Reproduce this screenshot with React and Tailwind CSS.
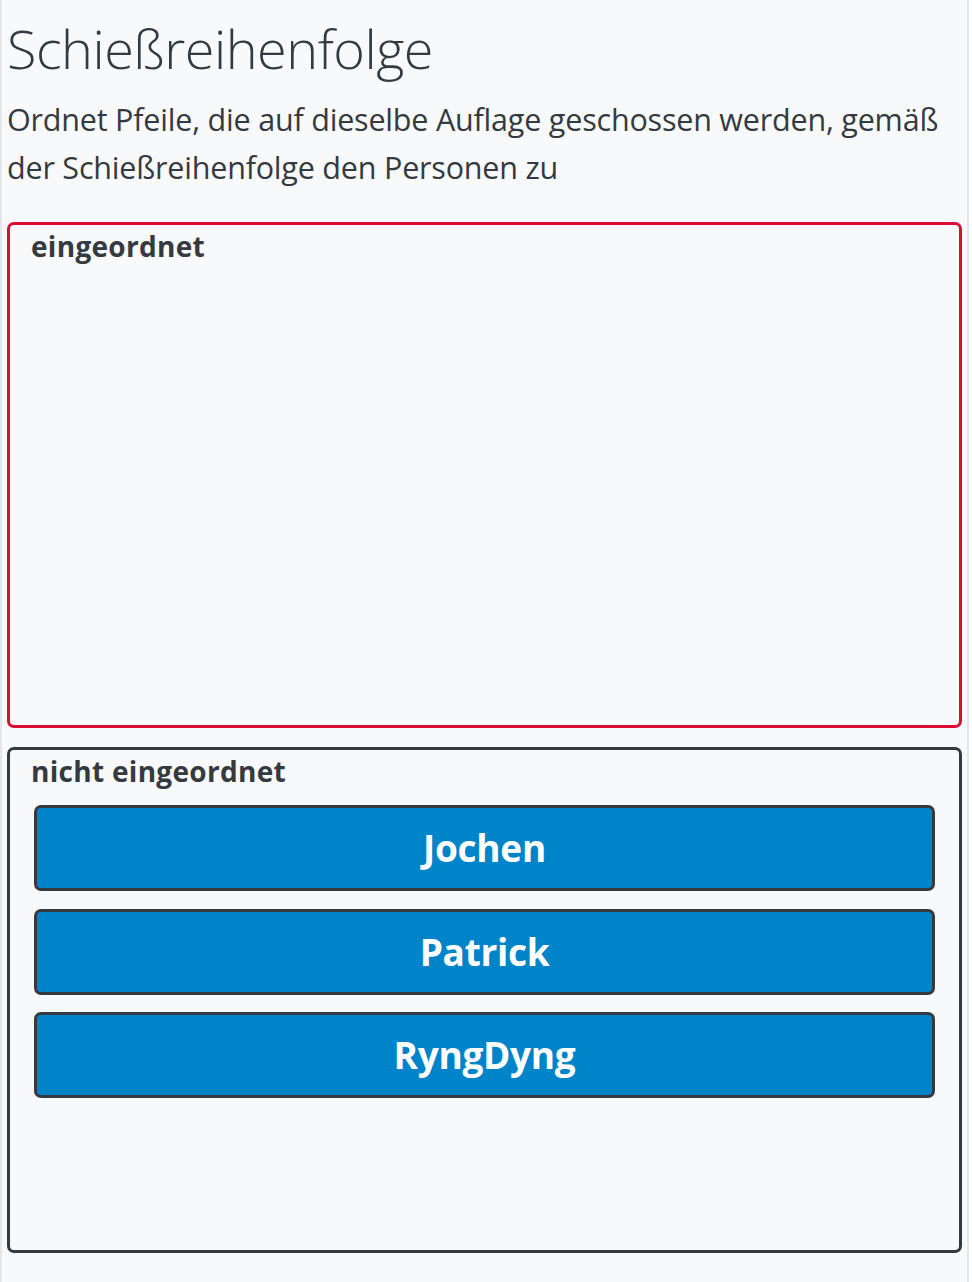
import React from "react";

const people = ["Jochen", "Patrick", "RyngDyng"];

export default function App() {
  return (
    <div
      className="min-h-screen w-[969px] border-x-2 border-[#e3e5e8] bg-[#f8f9fa] px-[5px] pb-[28px] text-[#343a40]"
      style={{ fontFamily: '"Open Sans", "Noto Sans", sans-serif' }}
    >
      <h1 className="pt-[15px] text-[54px] font-light leading-[66px] tracking-[-0.5px]">
        Schießreihenfolge
      </h1>
      <p className="mt-[14px] text-[30.5px] leading-[48px] tracking-[-0.2px]">
        Ordnet Pfeile, die auf dieselbe Auflage geschossen werden, gemäß der
        Schießreihenfolge den Personen zu
      </p>

      <div className="mt-[31px] flex flex-col gap-[19px]">
        <section className="h-[506px] rounded-[7px] border-[3px] border-[#dc0d33] px-[21px]">
          <h2 className="text-[28px] font-bold leading-[42px] tracking-[0.3px]">
            eingeordnet
          </h2>
        </section>

        <section className="h-[506px] rounded-[7px] border-[3px] border-[#343a40] px-[21px]">
          <h2 className="text-[28px] font-bold leading-[42px] tracking-[0.3px]">
            nicht eingeordnet
          </h2>
          <div className="mx-[3px] mt-[13px] flex flex-col gap-[17.5px]">
            {people.map((name) => (
              <div
                key={name}
                className="flex h-[86px] items-center justify-center rounded-[7px] border-[3px] border-[#343a40] bg-[#0084c9] text-[37px] font-bold tracking-[-0.3px] text-white"
              >
                {name}
              </div>
            ))}
          </div>
        </section>
      </div>
    </div>
  );
}
